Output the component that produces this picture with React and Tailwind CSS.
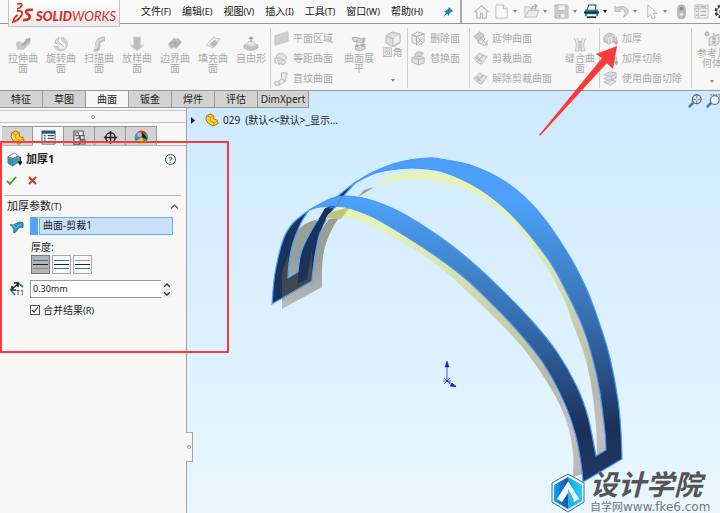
import React from "react";

const menus = [
  ["文件", "(F)"],
  ["编辑", "(E)"],
  ["视图", "(V)"],
  ["插入", "(I)"],
  ["工具", "(T)"],
  ["窗口", "(W)"],
  ["帮助", "(H)"],
];

const tabs = ["特征", "草图", "曲面", "钣金", "焊件", "评估", "DimXpert"];

// turns a list of points into a smooth run of bezier segments
function smooth(points, first = "M") {
  let d = `${first}${points[0][0]} ${points[0][1]}`;
  for (let i = 0; i < points.length - 1; i++) {
    const a = points[i - 1] || points[i];
    const b = points[i];
    const c = points[i + 1];
    const e = points[i + 2] || c;
    d += `C${b[0] + (c[0] - a[0]) / 6} ${b[1] + (c[1] - a[1]) / 6} ${c[0] - (e[0] - b[0]) / 6} ${c[1] - (e[1] - b[1]) / 6} ${c[0]} ${c[1]}`;
  }
  return d;
}

const backOuter = [[353, 184], [373, 172], [400, 162], [427, 158], [440, 159], [473, 166], [507, 183], [537, 210], [567, 252], [587, 290], [601, 328], [610, 358], [618, 400], [621, 433], [622, 459]];
const backInner = [[606, 450], [605, 433], [600, 393], [593, 360], [583, 328], [567, 293], [550, 262], [523, 227], [500, 204], [473, 185], [440, 171], [413, 168], [390, 170], [373, 174], [353, 184]];
const frontOuter = [[309, 210], [330, 199], [343, 196], [367, 199], [400, 212], [440, 237], [473, 263], [507, 295], [532, 321], [557, 352], [577, 387], [588, 417], [596, 456]];
const frontInner = [[583, 482], [581, 463], [575, 433], [563, 400], [543, 363], [515, 328], [490, 302], [467, 280], [440, 259], [407, 237], [373, 217], [353, 209], [337, 206], [320, 207], [309, 210]];
const leftLegOuter = [[309, 210], [293, 223], [283, 240], [275, 273], [272, 304]];
const leftLegInner = [[288, 278], [289, 263], [293, 243], [301, 223], [309, 210]];
const midLegLeft = [[298, 272], [301, 253], [310, 233], [323, 213], [337, 197], [357, 181]];
const midLegRight = [[357, 181], [341, 199], [330, 214], [321, 230], [316, 250], [313, 270], [312, 281]];
const backShadeTop = [[358, 197], [373, 187], [387, 178], [407, 172], [430, 171], [473, 183], [510, 210], [550, 262], [583, 330], [600, 393], [606, 450]];
const backShadeLow = [[597, 455], [596, 427], [592, 390], [585, 357], [573, 324], [563, 297], [543, 262], [517, 227], [490, 203], [460, 187], [440, 182], [413, 179], [390, 182], [373, 187], [358, 197]];
const frontShadeTop = [[316, 221], [330, 213], [343, 207], [380, 218], [440, 257], [490, 300], [543, 363], [575, 433], [583, 474]];
const frontShadeLow = [[573, 477], [573, 453], [567, 423], [553, 392], [527, 353], [501, 324], [473, 297], [440, 267], [407, 245], [373, 227], [357, 220], [340, 218], [316, 221]];
const rightShadeLeg = [[348, 208], [338, 219], [328, 238], [322, 260], [322, 287]];

const bands = smooth(backOuter) + smooth(frontInner, "L") + smooth(frontOuter, "L") + smooth(backInner, "L") + "Z";
const leftEnd = smooth(leftLegOuter) + "L312 281" + smooth([...midLegRight].reverse(), "L") + smooth([...midLegLeft].reverse(), "L") + smooth(leftLegInner, "L") + "Z";

function Model() {
  return (
    <svg className="absolute inset-0 h-full w-full" viewBox="187 108 533 405" preserveAspectRatio="xMinYMin slice" aria-hidden="true">
      <defs>
        <linearGradient id="steel" gradientUnits="userSpaceOnUse" x1="0" y1="160" x2="0" y2="480">
          <stop offset="0" stopColor="#4c9ff8" />
          <stop offset="0.13" stopColor="#4da1f8" />
          <stop offset="0.33" stopColor="#4186cd" />
          <stop offset="0.52" stopColor="#346baa" />
          <stop offset="0.7" stopColor="#264a7e" />
          <stop offset="0.84" stopColor="#1b3058" />
          <stop offset="1" stopColor="#203966" />
        </linearGradient>
        <linearGradient id="shade" gradientUnits="userSpaceOnUse" x1="0" y1="170" x2="0" y2="480">
          <stop offset="0" stopColor="#e7f2b9" />
          <stop offset="0.2" stopColor="#e6f0ba" />
          <stop offset="0.48" stopColor="#c8cfa9" />
          <stop offset="0.7" stopColor="#b5b9a9" />
          <stop offset="0.83" stopColor="#c5bfc0" />
          <stop offset="1" stopColor="#b9b7b6" />
        </linearGradient>
        <linearGradient id="dust" gradientUnits="userSpaceOnUse" x1="0" y1="210" x2="0" y2="310">
          <stop offset="0" stopColor="#9a9f91" />
          <stop offset="0.5" stopColor="#98a09c" />
          <stop offset="1" stopColor="#bababd" />
        </linearGradient>
      </defs>

      <path fill="url(#shade)" d={smooth(backShadeTop) + smooth(backShadeLow, "L") + "Z"} />
      <path fill="#9a9e96" d="M358 197L364 190L374 187L368 191Z" />
      <path fill="url(#dust)" d="M282 309V290L293 240Q299 223 316 220L324 216L309 240L300 270L311 279L316 250Q322 232 335 214L348 208Q332 224 327 238Q321 255 322 287Z" />
      <path fill="url(#dust)" d={"M300 309M312 292L313 270L316 250L321 230L334 212" + smooth(rightShadeLeg, "L") + "Z"} />
      <path fill="#1c325d" d={leftEnd} />
      <path fill="#41484d" d="M282 299L282 272L288 255L288 278L298 272L298 284L307 279L312 250L312 281Z" />
      <path fill="none" stroke="#4ea5ff" strokeWidth="1.2" d={leftEnd} />
      <path fill="url(#shade)" d={smooth(frontShadeTop) + smooth(frontShadeLow, "L") + "Z"} />
      <path fill="#c0c27f" d="M324 218L332 212L350 207L341 219L328 218Z" />
      <path fill="#1c325d" d="M325 208L335 206L327 216L320 232L312 232Z" />
      <path fill="url(#steel)" stroke="#4599f9" strokeWidth="1.2" d={bands} />
      <path fill="none" stroke="#3a7dec" strokeWidth="1" d="M329 208L336 207L342 197" />

      <g stroke="#1616ef" fill="#1616ef">
        <path d="M447 381V367M447 381L456 386M444 378l6 6M450 378l-6 6M443 381h8" fill="none" strokeWidth="0.7" />
        <path d="M447 361l2 6h-4zM456 387l-6-1 2-3z" strokeWidth="0.5" />
      </g>
    </svg>
  );
}

function Art({ name, className = "h-4 w-4" }) {
  const drawings = {
    extrude: (
      <>
        <path d="M1 7l3-2q2 3 5 1l2-2v-1l4-1v5l-4 4q-3 4-6 2l-2 1z" fill="#c9c9c9" stroke="#bbb" strokeWidth=".5" />
        <path d="M6 9l5-4-1-1 5-2v4l-1-1-5 5z" fill="#aaa" />
      </>
    ),
    revolve: (
      <>
        <path d="M8 1a7 7 0 11-7 9h4a4 4 0 106-4L9 5z" fill="#d0d0d0" stroke="#bbb" strokeWidth=".5" />
        <path d="M2 7q0-4 4-6L5 5l6 6M2 7l4 1" fill="#e4e4e4" stroke="#bbb" />
      </>
    ),
    sweep: (
      <>
        <path d="M3 13q4 1 4-3-1-3 1-5 2-2 6-2" fill="none" stroke="#bdbdbd" strokeWidth="5" />
        <path d="M3 12q3 0 3-3 0-6 7-6" fill="none" stroke="#d9d9d9" strokeWidth="2.5" />
      </>
    ),
    loft: <path d="M4 1h8l-1 8h4l-7 6-7-6h4z" fill="#bcbcbc" stroke="#dadada" />,
    patch: (
      <>
        <path d="M1 8l6-6q3 2 4 0l4 4-6 7q-2-3-5 0z" fill="#bbb" stroke="#d5d5d5" />
        <path d="M3 8q4-3 5 1t5-3M7 4l3 5" stroke="#999" fill="none" strokeWidth=".8" />
      </>
    ),
    fill: (
      <>
        <path d="M1 9l8-8q2 2 6 2l-7 9q-3-2-7-3z" fill="#f0f0f0" stroke="#c4c4c4" />
        <path d="M5 8l5-4 3 3-5 4z" fill="#b9b9b9" stroke="#a9a9a9" strokeWidth=".5" />
      </>
    ),
    free: (
      <>
        <path d="M1 9q7-4 14 0v3q-7 5-14 0z" fill="#c4c4c4" stroke="#b3b3b3" strokeWidth=".7" />
        <path d="M3 9q1-4 5-4t5 4q-5 3-10 0" fill="#e5e5e5" stroke="#c5c5c5" strokeWidth=".7" />
        <path d="M8 6V1M6 3l2-2 2 2" stroke="#a5a5a5" strokeWidth="1.3" />
      </>
    ),
    plane: <path d="M1 5l14-4v10L1 15z" fill="#cfcfcf" stroke="#c3c3c3" />,
    offset: (
      <>
        <path d="M2 5q6-6 12 2l-4 3Q7 6 3 8z" fill="#e2e2e2" stroke="#b8b8b8" />
        <path d="M4 10q4-2 9 1l-3 4q-3-2-5-1zM1 7v6h2" fill="#ddd" stroke="#b8b8b8" />
      </>
    ),
    ruled: <path d="M1 11l4 0 1 4H1zM5 11l3-3 4 3-6 4zM8 8V2h6l-2 9z" fill="#eaeaea" stroke="#b8b8b8" />,
    flatten: (
      <>
        <path d="M1 2q3-2 6 0t7 0l-1 4q-4 2-6 0t-4 0zM4 10l10-2v5q-5 3-9 1z" fill="#d6d6d6" stroke="#b1b1b1" />
        <path d="M6 4v7M4 9l2 2 2-2M12 3v8M10 9l2 2" stroke="#a3a3a3" fill="none" />
      </>
    ),
    cube: (
      <>
        <path d="M1 5l6-4 8 2v9l-7 4-7-4z" fill="#dedede" stroke="#b3b3b3" />
        <path d="M1 5l7 3v8M8 8q2-4 7-4" fill="none" stroke="#b3b3b3" />
        <path d="M8 8q2-5 7-4v7l-7 4z" fill="#eee" stroke="#c4c4c4" />
      </>
    ),
    deleteFace: (
      <>
        <path d="M1 4l6-3 7 2v9l-6 3-7-3z" fill="#ebebeb" stroke="#b6b6b6" />
        <path d="M1 4l5 2 8-3M6 6v9M8 8l4 4M12 8l-4 4" fill="none" stroke="#a0a0a0" />
      </>
    ),
    box: (
      <>
        <path d="M1 7l5-2 8 2v6l-6 2-7-3z" fill="#e0e0e0" stroke="#b5b5b5" />
        <path d="M1 7l7 2 6-2M8 9v6M4 4q2-5 9-2l-2 3-6 1z" fill="#d5d5d5" stroke="#b5b5b5" />
      </>
    ),
    extend: (
      <>
        <path d="M1 6l6-5 5 4-6 6z" fill="#ccc" stroke="#b5b5b5" />
        <path d="M5 12l5-6 3 2-4 6zM9 8l5 6M15 10v5h-5" fill="#e6e6e6" stroke="#ababab" />
      </>
    ),
    trim: (
      <>
        <path d="M1 8l6-6q3 3 8 4l-6 8q-5-1-8-6z" fill="#e3e3e3" stroke="#b8b8b8" />
        <path d="M5 5l5 7-4-1-4-4z" fill="#c4c4c4" />
        <path d="M11 4l-6 7" stroke="#aaa" />
      </>
    ),
    knit: (
      <>
        <path d="M2 2q4 6 1 13h4V5L5 2M14 2q-4 6-1 13H9V5l2-3" fill="#ededed" stroke="#bcbcbc" />
        <path d="M6 6h4M6 9h4M6 12h4" stroke="#ababab" />
      </>
    ),
    thicken: (
      <>
        <path d="M1 6l5-4 6 2v7l-6 3-5-3z" fill="#ccc" stroke="#b1b1b1" />
        <path d="M1 6l5 2 6-4M6 8v6M9 7v6" fill="none" stroke="#e9e9e9" />
        <path d="M14 6v8M12 11l2 3 2-3" fill="none" stroke="#a8a8a8" strokeWidth="1.3" />
      </>
    ),
    layers: (
      <>
        <path d="M1 12l6-3 7 2-6 4zM1 8l6-3 7 2-6 4z" fill="#e3e3e3" stroke="#b5b5b5" />
        <path d="M1 4l6-3 7 1-5 4zM9 6v4l5-3V2" fill="#ddd" stroke="#b5b5b5" />
      </>
    ),
    reference: (
      <>
        <circle cx="3" cy="3" r="2" fill="#ccc" stroke="#b0b0b0" />
        <path d="M5 7l4-2v8l-4 2zM11 5l4-2v9l-4 3z" fill="#e5e5e5" stroke="#b5b5b5" />
        <path d="M10 2v13" stroke="#999" strokeDasharray="3 1" />
      </>
    ),
    home: <path d="M1 8l7-6 7 6-2 1v6h-4v-5H7v5H3V9z" fill="#f3f3f3" stroke="#bcbcbc" strokeWidth="1.3" />,
    file: <path d="M2 1h8l4 4v10H2zM10 1v4h4" fill="#fafafa" stroke="#bcbcbc" />,
    open: (
      <>
        <path d="M1 14V3h5l1 2h6v2M1 14L5 7h11l-3 7z" fill="#ededed" stroke="#bcbcbc" />
        <path d="M8 6q0-4 5-4M11 0l3 2-3 3" fill="none" stroke="#b1b1b1" strokeWidth="1.5" />
      </>
    ),
    save: (
      <>
        <path d="M1 1h13l1 1v13H1z" fill="#cfcfcf" stroke="#b9b9b9" />
        <path d="M4 1h8v6H4zM4 10h8v5H4z" fill="#f0f0f0" stroke="#bdbdbd" />
        <path d="M6 11v3" stroke="#aaa" strokeWidth="2" />
      </>
    ),
    print: (
      <>
        <path d="M3 7L5 1h8l-1 6" fill="#fff" stroke="#24333d" />
        <path d="M1 6h14v7H1z" fill="#287f9f" />
        <path d="M0 8h16v2H0zM3 13h10v2H3z" fill="#162d3a" />
        <path d="M3 11h10v2H3z" fill="#fff" />
      </>
    ),
    undo: <path d="M1 2v6h6L5 6q6-3 7 4l-2 4q6-3 5-7-3-7-12-3z" fill="#d6d6d6" stroke="#b5b5b5" />,
    cursor: <path d="M4 1v13l3-3 2 5 3-1-2-5h4z" fill="#f7f7f7" stroke="#b5b5b5" />,
    signal: (
      <>
        <rect x="4" y="1" width="8" height="15" rx="4" fill="#bababa" stroke="#aaa" />
        <circle cx="8" cy="5" r="2" fill="#8c8c8c" />
        <circle cx="8" cy="11" r="2" fill="#ddd" />
      </>
    ),
    list: (
      <>
        <path d="M1 1h14v14H1zM5 1v14M1 5h14" fill="#f3f3f3" stroke="#bcbcbc" />
        <path d="M2 3h2M2 8h2M2 12h2M7 3h6M7 8h6M7 12h6" stroke="#b3b3b3" strokeWidth="1.5" />
      </>
    ),
    gear: (
      <>
        <circle cx="8" cy="8" r="6" stroke="#444" strokeWidth="3" strokeDasharray="3 1.7" />
        <circle cx="8" cy="8" r="5" fill="#f8f8f8" stroke="#444" />
        <circle cx="8" cy="8" r="2" stroke="#444" />
      </>
    ),
    part: (
      <>
        <path d="M2 3l4-2 4 2v4l4 1 1 4-6 3-6-4-2-4z" fill="#fbd03a" stroke="#94701b" />
        <path d="M2 3l4 2v4l4 2 5-2M6 5l4-2M10 11v4" fill="none" stroke="#c1921e" />
      </>
    ),
    property: (
      <>
        <path d="M1 1h14v14H1z" fill="#fff" stroke="#336580" />
        <path d="M1 1h14v3H1z" fill="#245f7d" />
        <path d="M3 6h2M3 9h2M3 12h2" stroke="#287da2" strokeWidth="2" />
        <path d="M7 6h7M7 9h7M7 12h7" stroke="#555" strokeWidth="1.3" />
      </>
    ),
    config: (
      <>
        <path d="M2 1h10v5H8v9H2z" fill="#eee" stroke="#555" strokeWidth="1.2" />
        <path d="M4 3h3v3H4zM4 9h2M9 6h4v4H9zM9 11h5v4H9zM6 8l3 2v3" fill="#eee" stroke="#666" strokeWidth="1.1" />
      </>
    ),
    target: (
      <>
        <circle cx="8" cy="8" r="5" fill="none" stroke="#222" strokeWidth="1.5" />
        <path d="M8 1v14M1 8h14" stroke="#222" strokeWidth="1.5" />
      </>
    ),
    ball: (
      <>
        <circle cx="8" cy="8" r="7" fill="#37a95d" />
        <path d="M8 8L4 2a7 7 0 019 1z" fill="#dc3430" />
        <path d="M8 8L4 2a7 7 0 00-2 10z" fill="#3c8fd3" />
        <path d="M8 8l-6 4a7 7 0 0010 2z" fill="#f2cb40" />
        <path d="M8 3q4 1 6 7l-5-2z" fill="#222" />
        <circle cx="6" cy="5" r="2.500" fill="#fff" opacity=".5" />
      </>
    ),
    blueThicken: (
      <>
        <path d="M1 5l6-3 5 2v7l-6 4-5-3z" fill="#3f9dbd" stroke="#2b6680" strokeWidth=".7" />
        <path d="M1 5l5 2 6-3-4-3z" fill="#fff" stroke="#666" strokeWidth=".7" />
        <path d="M3 7v5M6 7v7" stroke="#246681" strokeWidth=".7" />
        <path d="M14 5v8M12 10l2 3 2-3" fill="none" stroke="#111" strokeWidth="1.5" />
      </>
    ),
    face: (
      <>
        <path d="M1 6q4 1 6-1 4-3 8-1v5q-3-1-5 1-2 4-5 5v-4q-1-3-4-5z" fill="#3298bd" stroke="#205f79" strokeWidth=".8" />
        <path d="M3 7q3 0 4 3 3-4 6-4" stroke="#6ec0dc" />
      </>
    ),
    zoom: (
      <>
        <path d="M1 15l5-5" stroke="#417f9f" strokeWidth="3" />
        <circle cx="10" cy="6" r="5" fill="#eaf6ff" stroke="#555" strokeWidth="1.3" />
        <path d="M10 2v8M6 6h8" stroke="#555" strokeDasharray="3 2" />
      </>
    ),
    zoomArea: (
      <>
        <path d="M1 15l5-5" stroke="#417f9f" strokeWidth="3" />
        <circle cx="10" cy="7" r="5" fill="#e0f3ff" stroke="#5c686f" strokeWidth="1.3" />
        <path d="M5 1h11v5" fill="none" stroke="#555" strokeDasharray="2 1" />
      </>
    ),
  };
  return (
    <svg className={`shrink-0 ${className}`} viewBox="0 0 16 16" fill="none" aria-hidden="true">
      {drawings[name]}
    </svg>
  );
}

function Caret({ dark }) {
  return (
    <svg className="h-[3px] w-1 shrink-0" viewBox="0 0 4 3" aria-hidden="true">
      <path d="M0 0h4L2 3z" fill={dark ? "#222" : "#888"} />
    </svg>
  );
}

function BigTool({ icon, label }) {
  return (
    <button className="flex w-[38px] shrink-0 flex-col items-center px-1 pt-3">
      <Art name={icon} />
      <span className="mt-px w-[30px] leading-[10px]">{label}</span>
    </button>
  );
}

function ToolList({ items, className }) {
  return (
    <div className={`mt-1 mb-0.5 flex shrink-0 flex-col border-l border-[#cfcfcf] pl-[3px] ${className}`}>
      {items.map(([icon, label]) => (
        <button key={label} className="flex h-5 shrink-0 items-center gap-1 whitespace-nowrap">
          <Art name={icon} className="h-[15px] w-[15px]" />
          {label}
        </button>
      ))}
    </div>
  );
}

function QuickTool({ name, label, menu, dark }) {
  return (
    <button aria-label={label} className={`flex shrink-0 items-center ${menu ? "w-[30px] gap-1" : "w-5"}`}>
      <Art name={name} className="h-[15px] w-[15px]" />
      {menu && <Caret dark={dark} />}
    </button>
  );
}

function TopBar() {
  return (
    <header className="relative flex h-6 items-center border-b border-[#999] bg-[#f8f8f8] pl-2">
      <div className="relative z-10 flex h-[27px] w-[112px] shrink-0 items-center self-start border border-t-0 border-[#c3c3c3] bg-gradient-to-b from-white to-[#ececec] pl-[3px]">
        <svg className="h-[23px] w-[22px] shrink-0" viewBox="0 0 22 23" fill="none" stroke="#da291c" aria-hidden="true">
          <path d="M5 2q5-1 5 1-1 3-5 4" strokeWidth="1.7" />
          <path d="M5 9q6-1 5 3-2 6-9 8 1-5 5-7" strokeWidth="1.8" />
          <path d="M21 8q-7-1-7 2 0 1 3 3 3 5-6 5" strokeWidth="2.5" />
        </svg>
        <span className="ml-0.5 mt-1.5 whitespace-nowrap text-[13px] italic leading-none text-[#da291c] font-[Lato]">
          <b className="font-black">SOLID</b>
          <span className="font-normal">WORKS</span>
        </span>
      </div>
      <nav className="ml-[21px] flex shrink-0 items-center gap-[11px]">
        {menus.map(([name, key]) => (
          <button key={name} className="whitespace-nowrap text-[10px] leading-4 text-[#151515]">
            {name}
            <span className="text-[9px]">{key}</span>
          </button>
        ))}
      </nav>
      <svg className="ml-5 h-2.5 w-2.5 shrink-0" viewBox="0 0 10 10" aria-hidden="true">
        <path d="M6 0l4 4-2 1-2 2v2L4 7l-4 3 3-4-2-2h2l2-2z" fill="#1f87b2" />
      </svg>
      <div className="ml-auto flex h-full shrink-0 items-center border-l-2 border-[#aaa] pl-3">
        <QuickTool name="home" label="主页" />
        <QuickTool name="file" label="新建" menu />
        <QuickTool name="open" label="打开" menu />
        <QuickTool name="save" label="保存" menu />
        <QuickTool name="print" label="打印" menu dark />
        <QuickTool name="undo" label="撤销" menu />
        <QuickTool name="cursor" label="选择" menu />
        <QuickTool name="signal" label="重建" />
        <QuickTool name="list" label="属性" />
        <div className="w-1.5 overflow-hidden">
          <QuickTool name="gear" label="选项" />
        </div>
      </div>
    </header>
  );
}

function Toolbar() {
  return (
    <div className="flex h-[67px] overflow-hidden border-b border-[#999] bg-[#f7f7f7] pl-1 text-[10px] leading-[10px] text-[#ababab]">
      <BigTool icon="extrude" label="拉伸曲面" />
      <BigTool icon="revolve" label="旋转曲面" />
      <BigTool icon="sweep" label="扫描曲面" />
      <BigTool icon="loft" label="放样曲面" />
      <BigTool icon="patch" label="边界曲面" />
      <BigTool icon="fill" label="填充曲面" />
      <BigTool icon="free" label="自由形" />
      <ToolList className="w-[70px]" items={[["plane", "平面区域"], ["offset", "等距曲面"], ["ruled", "直纹曲面"]]} />
      <BigTool icon="flatten" label="曲面展平" />
      <button className="flex w-[29px] shrink-0 flex-col items-center pt-[7px]">
        <Art name="cube" />
        <span className="whitespace-nowrap">圆角</span>
        <span className="mt-[22px]"><Caret /></span>
      </button>
      <ToolList className="w-[62px]" items={[["deleteFace", "删除面"], ["box", "替换面"]]} />
      <ToolList className="w-[92px]" items={[["extend", "延伸曲面"], ["trim", "剪裁曲面"], ["trim", "解除剪裁曲面"]]} />
      <BigTool icon="knit" label="缝合曲面" />
      <ToolList className="w-[92px]" items={[["thicken", "加厚"], ["thicken", "加厚切除"], ["layers", "使用曲面切除"]]} />
      <div className="mt-1 mb-0.5 flex shrink-0 border-l border-[#cfcfcf]">
        <button className="flex w-[40px] flex-col items-center pt-[3px]">
          <Art name="reference" />
          <span className="mt-px w-[30px]">参考几何体</span>
          <span className="mt-3"><Caret /></span>
        </button>
      </div>
    </div>
  );
}

function ThicknessButton({ colors, active, label }) {
  return (
    <button aria-label={label} aria-pressed={!!active} className={`flex h-[19px] w-[19px] items-center justify-center border ${active ? "border-[#777] bg-[#b5b5b5]" : "border-[#aaa] bg-[#f8f8f8]"}`}>
      <svg className="h-[11px] w-[15px]" viewBox="0 0 15 11" aria-hidden="true">
        {colors.map((c, i) => (
          <path key={i} d={`M0 ${i * 4 + 1}h15v1H0z`} fill={c} />
        ))}
      </svg>
    </button>
  );
}

function PropertyPanel() {
  const icons = ["part", "property", "config", "target", "ball"];
  return (
    <aside className="relative w-[187px] shrink-0 border-r border-[#a4a4a4] bg-[#f7f7f7] text-[10px] text-[#222]">
      <div className="mt-0.5 flex h-[13px] items-center justify-center border-y border-[#c4c4c4]">
        <span className="h-1 w-1 rounded-full border border-[#999]" />
      </div>
      <div className="mt-[3px] flex h-5 border-b border-[#b5b5b5] pl-0.5">
        {icons.map((name, i) => (
          <button
            key={name}
            aria-label={name}
            className={`flex w-[31px] items-center justify-center border-r border-t border-[#999] pt-0.5 ${i === 1 ? "-mb-px bg-[#f7f7f7]" : "bg-[#d3d3d3]"}`}
          >
            <Art name={name} className="h-[15px] w-[15px]" />
          </button>
        ))}
      </div>

      <div className="flex h-[26px] items-center pl-[7px] pr-[10px]">
        <Art name="blueThicken" className="h-[15px] w-[15px]" />
        <h1 className="ml-1 text-[11px] font-bold leading-4">加厚1</h1>
        <button aria-label="帮助" className="ml-auto flex h-[11px] w-[11px] items-center justify-center rounded-full border border-[#444] text-[9px] font-bold leading-none text-[#257ea5]">?</button>
      </div>
      <div className="flex h-4 items-center gap-[11px] pl-1.5">
        <button aria-label="确定">
          <svg className="h-[11px] w-[11px]" viewBox="0 0 11 11" fill="none" aria-hidden="true">
            <path d="M1 6l3 3 6-7" stroke="#3b9d20" strokeWidth="1.8" />
          </svg>
        </button>
        <button aria-label="取消">
          <svg className="h-[9px] w-[9px]" viewBox="0 0 9 9" fill="none" aria-hidden="true">
            <path d="M1 1l7 7M8 1L1 8" stroke="#d83217" strokeWidth="1.8" />
          </svg>
        </button>
      </div>

      <section className="ml-1 mr-[5px] mt-[7px] border-t border-[#bbb] pl-[3px]">
        <button className="flex h-[21px] w-full items-center justify-between pr-0.5">
          <span className="text-[11px]">加厚参数<span className="text-[9px]">(T)</span></span>
          <svg className="h-[5px] w-[9px]" viewBox="0 0 9 5" fill="none" aria-hidden="true">
            <path d="M1 4.500l3.500-3.500 3.500 3.500" stroke="#555" strokeWidth="1.2" />
          </svg>
        </button>
        <div className="flex h-[18px] items-center">
          <Art name="face" className="ml-0.5 h-[15px] w-[15px]" />
          <span className="ml-1.5 h-full w-2 bg-[#52a4ff]" />
          <input aria-label="要加厚的曲面" readOnly defaultValue="曲面-剪裁1" className="ml-px h-[18px] w-[134px] border border-[#62b4ec] bg-[#c9e1f8] px-[3px] pb-1 text-[10px] leading-3 outline-none" />
        </div>
        <div className="pl-[24px]">
          <p className="mt-1 h-4 leading-4">厚度:</p>
          <div className="flex gap-0.5">
            <ThicknessButton active label="加厚侧边1" colors={["#257aa0", "#222", "#888"]} />
            <ThicknessButton label="加厚两侧" colors={["#257aa0", "#222", "#257aa0"]} />
            <ThicknessButton label="加厚侧边2" colors={["#999", "#222", "#257aa0"]} />
          </div>
        </div>
        <div className="mt-1.5 flex h-[18px] items-center">
          <svg className="ml-0.5 h-4 w-4" viewBox="0 0 16 16" fill="none" aria-hidden="true">
            <path d="M1 8l5 6M8 1l6 5" stroke="#287fa4" strokeWidth="1.7" />
            <path d="M3 8l6-5M3 5v4h4M5 2h4v4" stroke="#222" strokeWidth="1.6" />
            <text x="7" y="14" fontSize="7" fontFamily="Noto Sans" fill="#222">T1</text>
          </svg>
          <input aria-label="厚度" defaultValue="0.30mm" className="ml-[5px] h-[18px] w-[131px] border border-r-0 border-[#999] bg-white px-0.5 pb-0.5 text-[9px] outline-none" />
          <span className="ml-px flex h-full w-[10px] flex-col items-center justify-around bg-[#eee]">
            <button aria-label="增加"><svg className="h-1 w-1.5" viewBox="0 0 6 4" fill="none"><path d="M0 4l3-3 3 3" stroke="#333" strokeWidth="1.3" /></svg></button>
            <button aria-label="减少"><svg className="h-1 w-1.5" viewBox="0 0 6 4" fill="none"><path d="M0 0l3 3 3-3" stroke="#333" strokeWidth="1.3" /></svg></button>
          </span>
        </div>
        <label className="relative ml-[23px] mt-1 flex h-4 items-center gap-[3px]">
          <input type="checkbox" defaultChecked className="h-2.5 w-2.5 appearance-none border border-[#555] bg-white" />
          <svg className="pointer-events-none absolute left-0 h-2.5 w-2.5" viewBox="0 0 10 10" fill="none" aria-hidden="true">
            <path d="M2 5l2 2 4-5" stroke="#333" strokeWidth="1.2" />
          </svg>
          <span>合并结果<span className="text-[9px]">(R)</span></span>
        </label>
      </section>

      <button aria-label="折叠面板" className="absolute -right-[7px] top-[324px] z-10 flex h-[30px] w-[7px] items-center justify-center border border-l-0 border-[#a4a4a4] bg-[#f7f7f7]">
        <span className="h-1 w-1 rounded-full border border-[#999]" />
      </button>
    </aside>
  );
}

function Watermark() {
  return (
    <div className="absolute bottom-0 right-0 flex w-[170px] items-end gap-1">
      <svg className="h-10 w-[36px] shrink-0" viewBox="0 0 36 40" aria-hidden="true">
        <defs>
          <linearGradient id="badge" x1="0" x2="1">
            <stop offset="0" stopColor="#12a5ec" />
            <stop offset="0.48" stopColor="#1a4fa5" />
            <stop offset="0.5" stopColor="#1e9fe0" />
            <stop offset="1" stopColor="#25d0f4" />
          </linearGradient>
        </defs>
        <path d="M18 1l16 9v19l-16 10-16-10V10z" fill="#e9f7ff" stroke="#3f6fae" />
        <path d="M18 4l14 8v16l-14 8-14-8V12z" fill="url(#badge)" />
        <path d="M17 10L7 26l5 3 6-9 6 9 5-3L19 10q-1-2-2 0z" fill="#fff" />
        <path d="M18 16l6 11-6 9z" fill="#29b8ea" />
        <path d="M18 10l6 17 5-1-10-16z" fill="#e3f7fc" />
      </svg>
      <div className="text-[#555]">
        <p className="whitespace-nowrap text-[28px] font-bold italic leading-[34px]">设计学院</p>
        <p className="whitespace-nowrap text-[11px] leading-[11px] text-[#777]">
          自学网<span className="text-[12px] font-[DejaVu_Sans]">www.fke6.com</span>
        </p>
      </div>
    </div>
  );
}

export default function App() {
  return (
    <main className="relative flex min-h-screen w-full flex-col overflow-hidden bg-gradient-to-b from-[#c8e6ff] to-[#e9f7ff] font-['Noto_Sans','Noto_Sans_CJK_SC',sans-serif]">
      <TopBar />
      <Toolbar />
      <div className="flex h-[17px] items-stretch text-[10px] leading-4 text-[#222]">
        {tabs.map((tab) => (
          <button
            key={tab}
            className={`border-b border-r border-[#999] ${tab === "DimXpert" ? "w-[51px]" : "w-[43px]"} ${tab === "曲面" ? "bg-[#f7f7f7]" : "bg-[#d2d2d2]"}`}
          >
            {tab}
          </button>
        ))}
        <div className="relative z-10 ml-auto flex w-8 items-end gap-1 overflow-hidden">
          <button aria-label="整屏显示全图" className="shrink-0"><Art name="zoom" className="h-[14px] w-[14px]" /></button>
          <button aria-label="局部放大" className="shrink-0"><Art name="zoomArea" className="h-[14px] w-[14px]" /></button>
        </div>
      </div>
      <div className="flex flex-1">
        <PropertyPanel />
        <section className="relative flex-1">
          <Model />
          <button className="relative flex h-6 items-center whitespace-nowrap pl-1 text-[10px] text-[#222]">
            <svg className="h-[7px] w-1" viewBox="0 0 4 7" aria-hidden="true"><path d="M0 0l4 3.500L0 7z" fill="#222" /></svg>
            <Art name="part" className="ml-[10px] h-[14px] w-[14px]" />
            <span className="ml-1">029&nbsp; (默认&lt;&lt;默认&gt;_显示...</span>
          </button>
          <Watermark />
        </section>
      </div>

      {/* callouts */}
      <div className="pointer-events-none absolute left-0 top-[141px] z-20 h-[212px] w-[229px] border-2 border-[#fb3b3b]" />
      <svg className="pointer-events-none absolute left-[538px] top-[45px] z-20 h-[92px] w-[80px]" viewBox="0 0 80 92" aria-hidden="true">
        <path d="M1 90L64 13 58 9 79 1 75 24 69 18 2 91z" fill="#fb3b3b" />
      </svg>
    </main>
  );
}
